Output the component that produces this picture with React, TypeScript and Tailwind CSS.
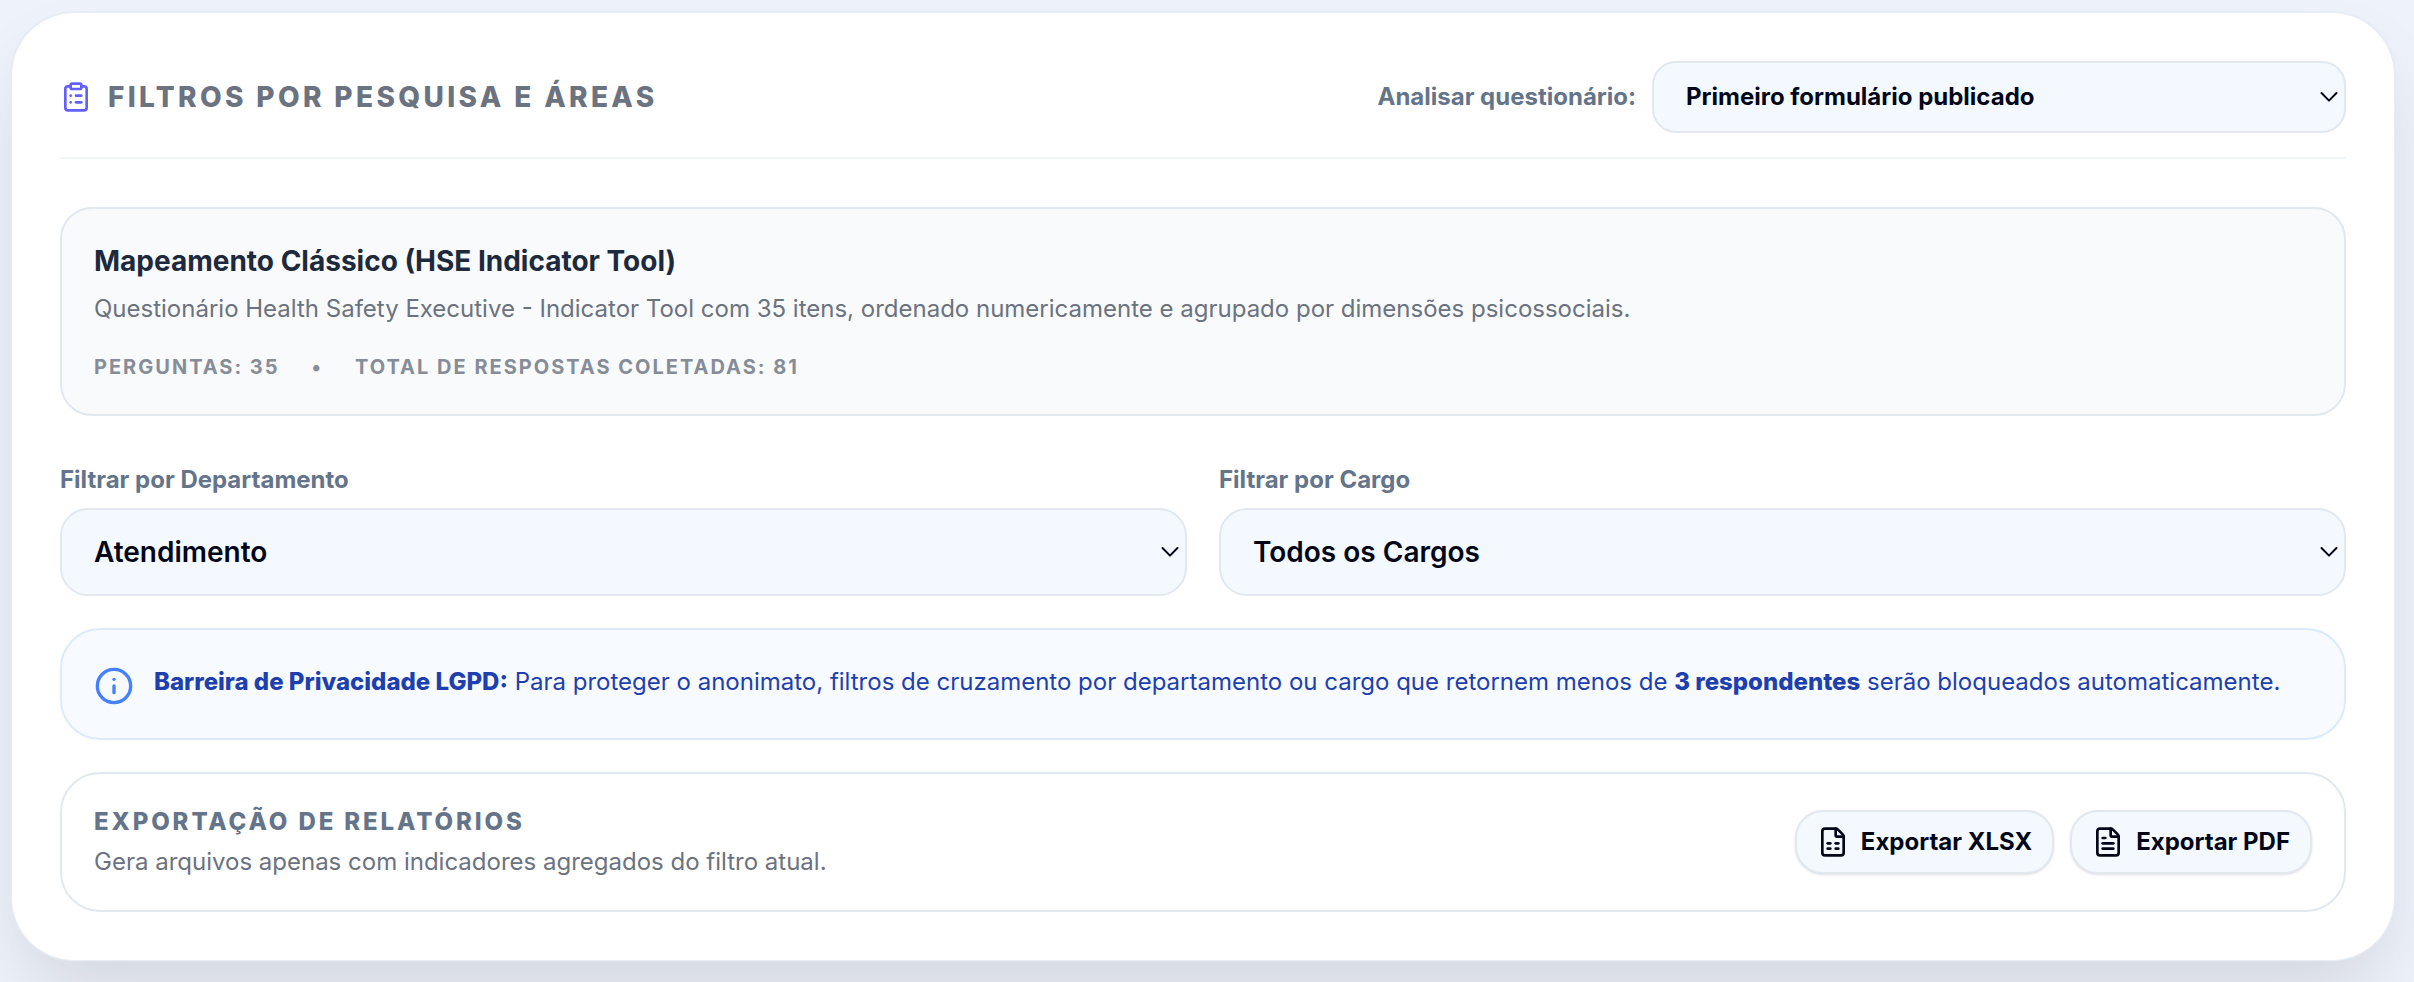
import { useState } from "react";
import {
  ClipboardList,
  FileSpreadsheet,
  FileText,
  Info,
  type LucideIcon,
} from "lucide-react";

const forms = ["Primeiro formulário publicado"];
const departments = ["Atendimento", "Todos os Departamentos"];
const roles = ["Todos os Cargos"];

const exportActions: { label: string; icon: LucideIcon }[] = [
  { label: "Exportar XLSX", icon: FileSpreadsheet },
  { label: "Exportar PDF", icon: FileText },
];

type SelectProps = {
  id: string;
  options: string[];
  className: string;
};

function Select({ id, options, className }: SelectProps) {
  const [value, setValue] = useState(options[0]);

  return (
    <div className="relative w-full">
      <select
        id={id}
        value={value}
        onChange={(e) => setValue(e.target.value)}
        className={`block w-full appearance-none border-2 border-slate-200 bg-[#f4f8ff] px-8 text-slate-950 outline-none ${className}`}
      >
        {options.map((option) => (
          <option key={option}>{option}</option>
        ))}
      </select>
      <svg
        viewBox="0 0 18 12"
        fill="none"
        stroke="currentColor"
        strokeWidth="2"
        strokeLinecap="round"
        strokeLinejoin="round"
        className="pointer-events-none absolute inset-y-0 right-2 my-auto h-3 w-[18px] text-slate-950"
      >
        <path d="M1.5 2 9 9.6 16.5 2" />
      </svg>
    </div>
  );
}

export default function App() {
  return (
    <div className="min-h-screen overflow-hidden bg-[#eef2fb] pt-[11px] pr-[18px] pb-5 pl-[10px] font-[Inter,sans-serif]">
      <section className="rounded-[64px] border-2 border-slate-200/50 bg-white bg-clip-padding p-12 shadow-[0_40px_80px_-16px_rgba(0,0,0,0.13)]">
        <header className="mb-12 flex items-center justify-between gap-8 border-b-2 border-slate-100 pb-6">
          <h2 className="flex items-center gap-4 text-[28px] leading-10 font-extrabold tracking-[0.12em] text-[#6b7280] uppercase">
            <ClipboardList className="size-8 text-indigo-500" />
            Filtros por Pesquisa e Áreas
          </h2>
          <div className="flex items-center gap-4">
            <label
              htmlFor="form"
              className="text-2xl font-bold whitespace-nowrap text-[#64748b]"
            >
              Analisar questionário:
            </label>
            <div className="w-[694px]">
              <Select
                id="form"
                options={forms}
                className="h-18 rounded-3xl text-2xl font-bold"
              />
            </div>
          </div>
        </header>

        <div className="rounded-4xl border-2 border-slate-200 bg-slate-50 p-8">
          <h3 className="text-[28px] leading-10 font-bold text-slate-800">
            Mapeamento Clássico (HSE Indicator Tool)
          </h3>
          <p className="mt-2 text-2xl leading-[39px] text-[#6b7280]">
            Questionário Health Safety Executive - Indicator Tool com 35 itens,
            ordenado numericamente e agrupado por dimensões psicossociais.
          </p>
          <div className="mt-6 flex gap-8 text-xl leading-[30px] font-bold tracking-widest text-[#868d98] uppercase">
            <span>Perguntas: 35</span>
            <span>•</span>
            <span>Total de respostas coletadas: 81</span>
          </div>
        </div>

        <div className="mt-12 grid grid-cols-2 gap-8">
          <div className="flex flex-col gap-3">
            <label
              htmlFor="department"
              className="text-2xl font-bold text-[#64748b]"
            >
              Filtrar por Departamento
            </label>
            <Select
              id="department"
              options={departments}
              className="h-22 rounded-[28px] text-[28px] font-semibold"
            />
          </div>
          <div className="flex flex-col gap-3">
            <label htmlFor="role" className="text-2xl font-bold text-[#64748b]">
              Filtrar por Cargo
            </label>
            <Select
              id="role"
              options={roles}
              className="h-22 rounded-[28px] text-[28px] font-semibold"
            />
          </div>
        </div>

        <div className="mt-8 flex items-start gap-5 rounded-[40px] border-2 border-blue-100 bg-[#f7faff] p-8">
          <Info className="mt-1 size-10 shrink-0 text-[#4580ff]" />
          <p className="text-2xl leading-[39px] text-[#1e40af]">
            <strong className="font-extrabold">
              Barreira de Privacidade LGPD:
            </strong>{" "}
            Para proteger o anonimato, filtros de cruzamento por departamento ou
            cargo que retornem menos de{" "}
            <strong className="font-extrabold">3 respondentes</strong> serão
            bloqueados automaticamente.
          </p>
        </div>

        <div className="mt-8 flex items-center justify-between gap-8 rounded-[40px] border-2 border-slate-200 bg-white p-8">
          <div className="flex flex-col gap-2">
            <h3 className="text-2xl font-extrabold tracking-[0.12em] text-[#64748b] uppercase">
              Exportação de Relatórios
            </h3>
            <p className="text-2xl text-[#6b7280]">
              Gera arquivos apenas com indicadores agregados do filtro atual.
            </p>
          </div>
          <div className="flex gap-4">
            {exportActions.map(({ label, icon: Icon }) => (
              <button
                key={label}
                type="button"
                className="flex h-16 items-center gap-3 rounded-[28px] border-2 border-slate-200 bg-[#f4f8ff] px-5 text-2xl font-bold text-slate-950 shadow-sm"
              >
                <Icon className="size-8" />
                {label}
              </button>
            ))}
          </div>
        </div>
      </section>
    </div>
  );
}
